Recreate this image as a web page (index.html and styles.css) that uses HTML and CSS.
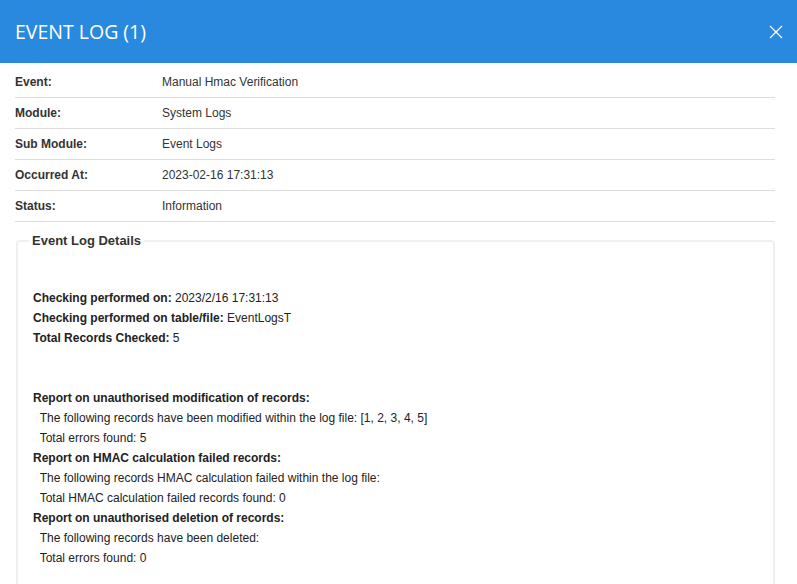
FILE: index.html
```html
<!DOCTYPE html>
<html lang="en">

<head>
    <meta charset="UTF-8">
    <meta name="viewport" content="width=device-width, initial-scale=1.0">
    <title>Event Log</title>
    <link rel="stylesheet" href="styles.css">
</head>

<body>
    <div class="modal-header">
        <h2 class="modal-title">EVENT LOG (1)</h2>
        <span class="modal-close" title="Close">
            <svg width="14" height="14" viewBox="0 0 14 14">
                <path d="M1 1 L13 13 M13 1 L1 13" stroke="#fff" stroke-width="1.3" fill="none" />
            </svg>
        </span>
    </div>

    <div class="modal-body">
        <div class="info-table">
            <div class="info-row">
                <div class="info-label">Event:</div>
                <div class="info-value">Manual Hmac Verification</div>
            </div>
            <div class="info-row">
                <div class="info-label">Module:</div>
                <div class="info-value">System Logs</div>
            </div>
            <div class="info-row">
                <div class="info-label">Sub Module:</div>
                <div class="info-value">Event Logs</div>
            </div>
            <div class="info-row">
                <div class="info-label">Occurred At:</div>
                <div class="info-value">2023-02-16 17:31:13</div>
            </div>
            <div class="info-row">
                <div class="info-label">Status:</div>
                <div class="info-value">Information</div>
            </div>
        </div>

        <fieldset class="details">
            <legend>Event Log Details</legend>
            <div class="details-text">
                <br>
                <b>Checking performed on:</b> 2023/2/16 17:31:13<br>
                <b>Checking performed on table/file:</b> EventLogsT<br>
                <b>Total Records Checked:</b> 5<br>
                <br>
                <br>
                <b>Report on unauthorised modification of records:</b><br>
                &nbsp;&nbsp;The following records have been modified within the log file: [1, 2, 3, 4, 5]<br>
                &nbsp;&nbsp;Total errors found: 5<br>
                <b>Report on HMAC calculation failed records:</b><br>
                &nbsp;&nbsp;The following records HMAC calculation failed within the log file:<br>
                &nbsp;&nbsp;Total HMAC calculation failed records found: 0<br>
                <b>Report on unauthorised deletion of records:</b><br>
                &nbsp;&nbsp;The following records have been deleted:<br>
                &nbsp;&nbsp;Total errors found: 0<br>
                <br>
            </div>
        </fieldset>
    </div>
</body>

</html>
```

FILE: styles.css
```css
body {
    margin: 0;
    font-family: "Liberation Sans", Arial, sans-serif;
    font-size: 12px;
    color: #333;
    background: #fff;
}

.modal-header {
    display: flex;
    align-items: center;
    justify-content: space-between;
    height: 63px;
    padding: 0 14px 0 15px;
    background-color: #2989de;
    box-sizing: border-box;
}

.modal-title {
    margin: 0;
    font-family: "Open Sans", "Noto Sans", sans-serif;
    font-size: 19.5px;
    font-weight: normal;
    color: #fff;
}

.modal-close {
    display: flex;
    cursor: pointer;
}

.modal-body {
    padding: 4px 22px 0 15px;
}

.info-row {
    display: flex;
    align-items: center;
    height: 30px;
    border-bottom: 1px solid #ddd;
}

.info-label {
    width: 147px;
    font-weight: bold;
}

.details {
    margin: 11px 0 0 1px;
    padding: 0 15px 0 15px;
    border: 2px solid #f0f0f0;
    border-radius: 4px;
}

.details legend {
    padding: 0 3px;
    margin-left: -4px;
    font-size: 13px;
    font-weight: bold;
    color: #333;
}

.details-text {
    line-height: 20px;
    color: #222;
    padding-top: 20px;
}
```
